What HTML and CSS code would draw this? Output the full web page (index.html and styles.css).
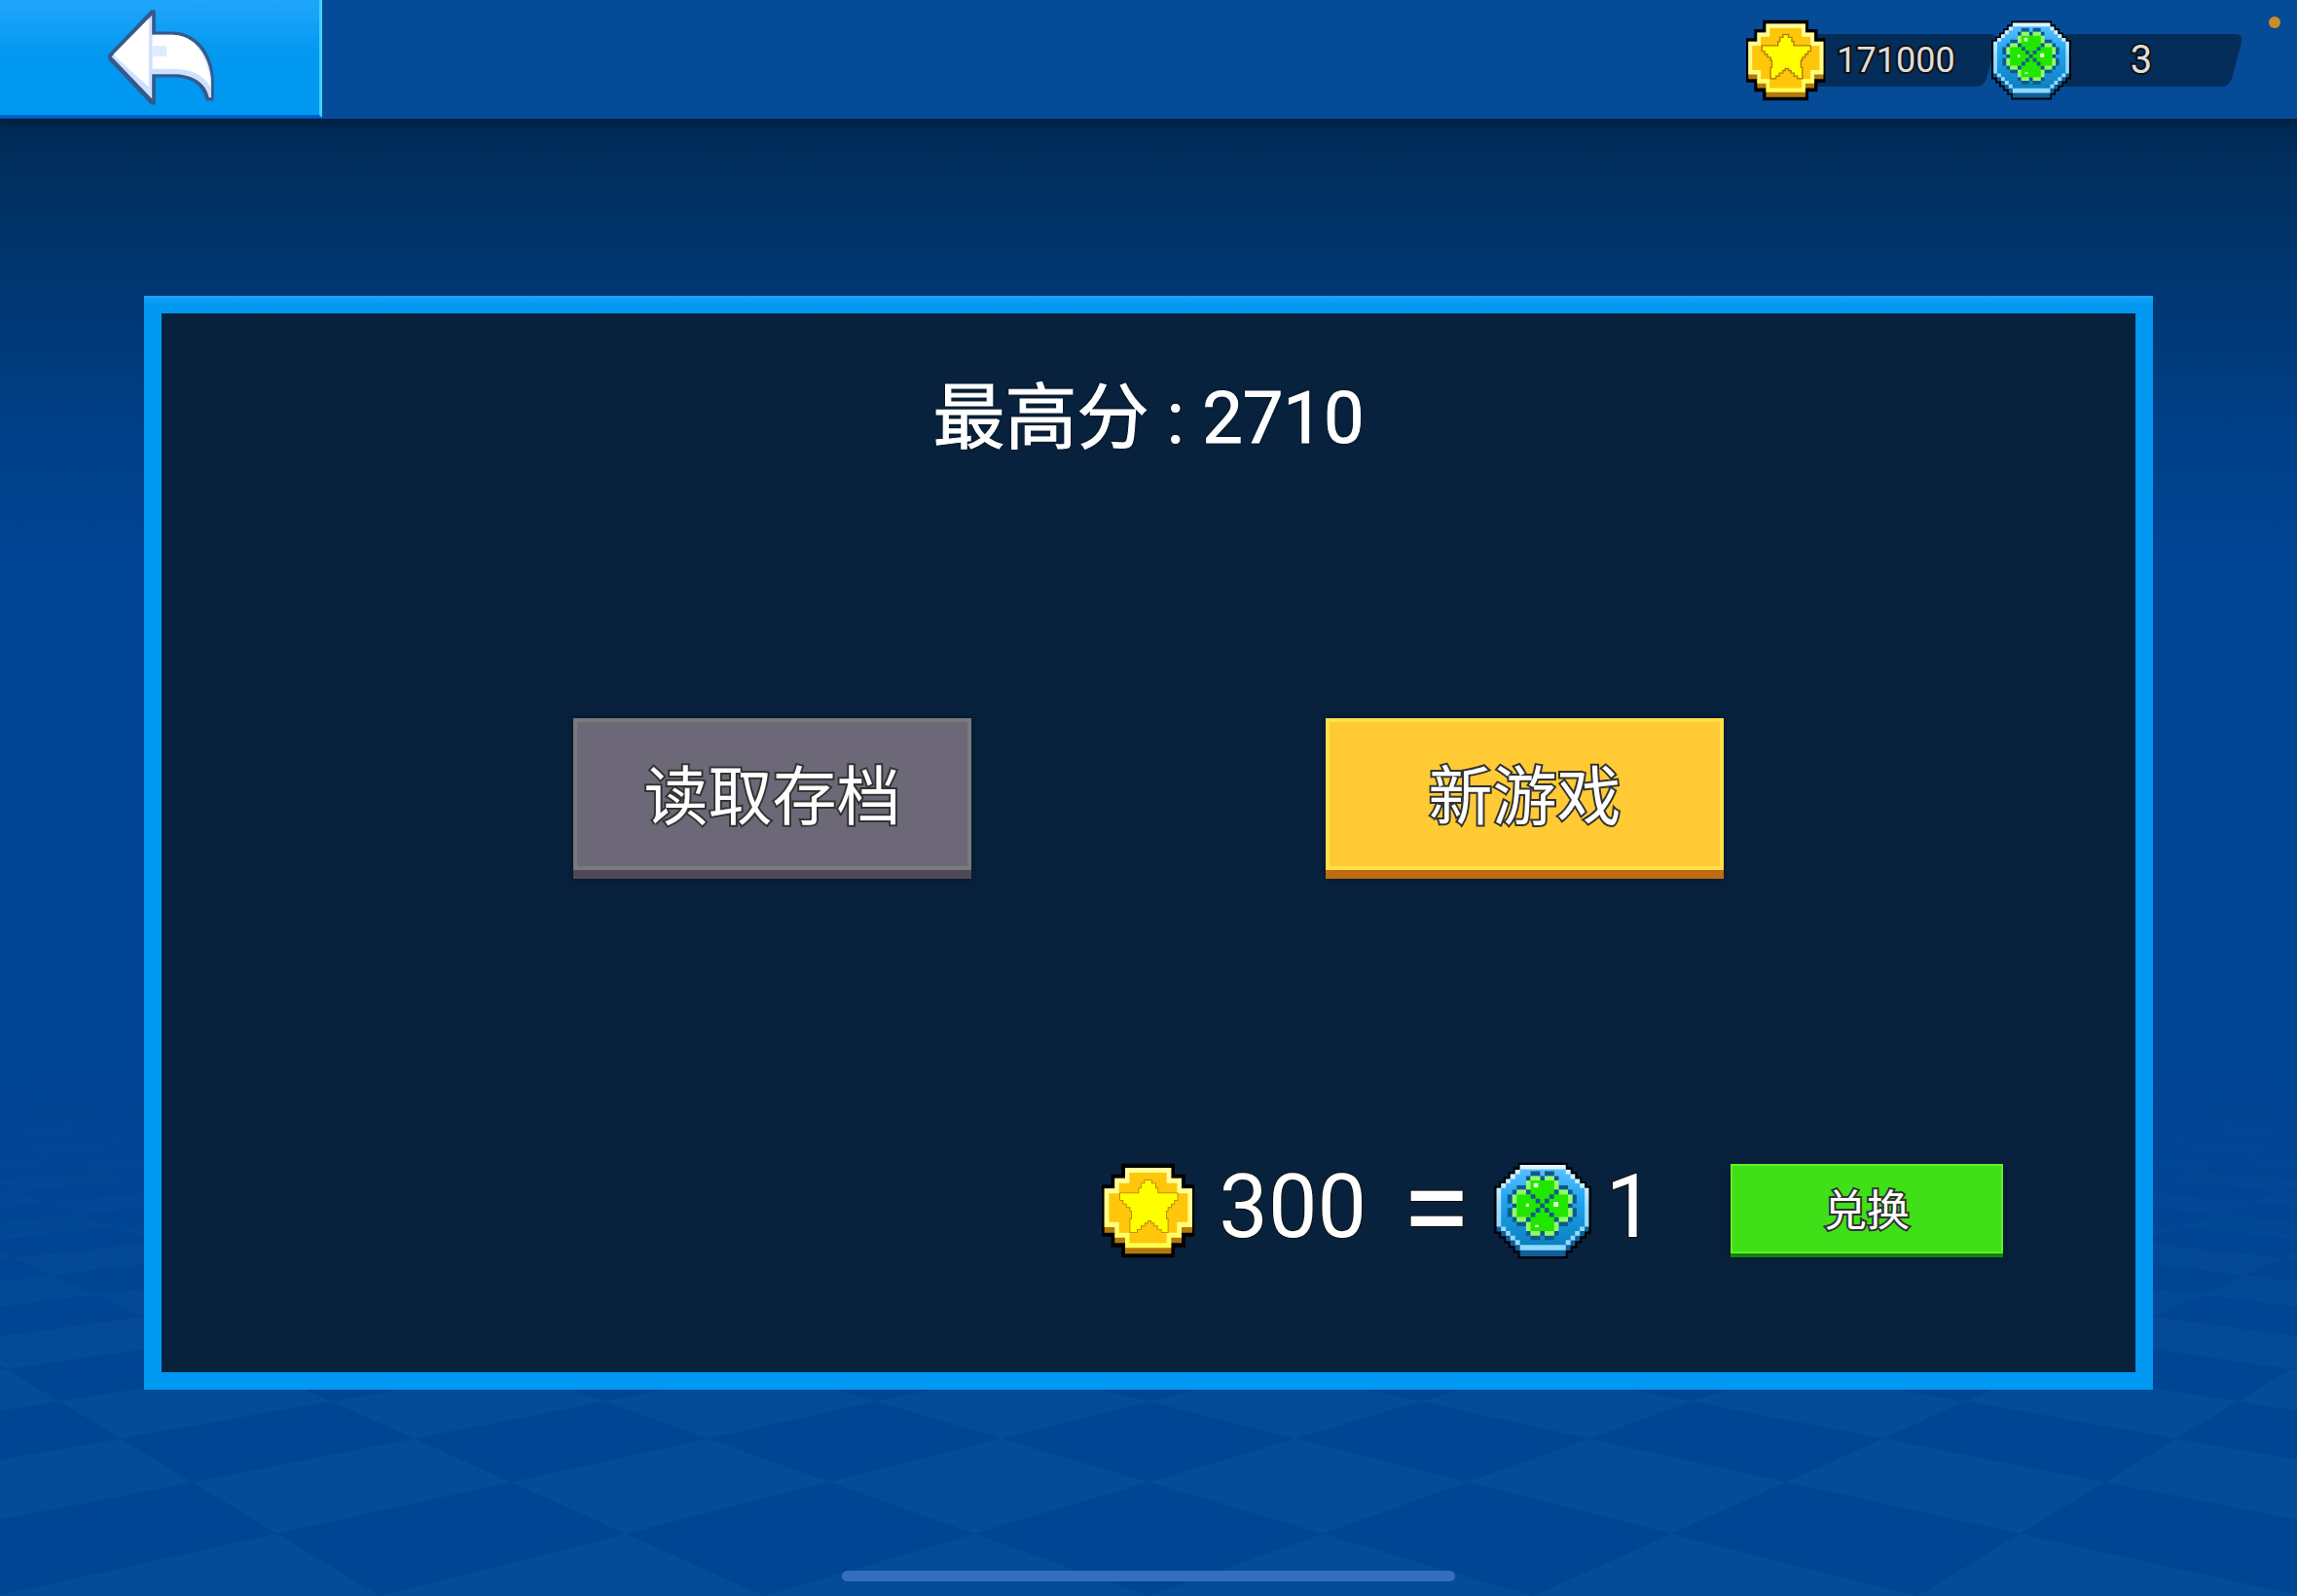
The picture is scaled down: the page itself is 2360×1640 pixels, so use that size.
FILE: index.html
```
<!DOCTYPE html>
<html lang="zh-CN">
<head>
	<meta charset="UTF-8">
	<title>最高分</title>
	<link rel="stylesheet" href="styles.css">
</head>
<body>
	<!-- icons -->
	<svg class="defs" width="0" height="0" aria-hidden="true">
		<defs>
			<linearGradient id="coinRim" x1="0" y1="0" x2="0" y2="1">
				<stop offset="0" stop-color="#ffff9c"/>
				<stop offset=".6" stop-color="#ffff90"/>
				<stop offset="1" stop-color="#ffff4a"/>
			</linearGradient>
			<linearGradient id="gemRim" x1="0" y1="0" x2="0" y2="1">
				<stop offset="0" stop-color="#e4f5ff"/>
				<stop offset=".3" stop-color="#c4eaff"/>
				<stop offset=".5" stop-color="#98dcff"/>
				<stop offset="1" stop-color="#8fd8ff"/>
			</linearGradient>
			<linearGradient id="gemFace" x1="0" y1="0" x2="0" y2="1">
				<stop offset="0" stop-color="#58c0ff"/>
				<stop offset=".4" stop-color="#22a4ee"/>
				<stop offset="1" stop-color="#0c80c0"/>
			</linearGradient>
			<symbol id="coin" viewBox="35 43 288 294">
				<path fill="#000" d="M95 45H260V78H293V110H321V270H293V303H260V335H95V303H64V270H35V110H64V78H95Z"/>
				<path fill="#b4780c" d="M107 58H249V90H281V122H314V258H281V290H249V323H107V290H75V258H43V122H75V90H107Z"/>
				<path fill="url(#coinRim)" d="M107 58H249V90H281V122H314V241H281V273H249V305H107V273H75V241H43V122H75V90H107Z"/>
				<path fill="#ffc60a" d="M120 73H235V105H267V137H300V225H267V258H235V290H120V258H88V225H57V137H88V105H120Z"/>
				<path fill="#ff0" stroke="#b87a10" stroke-width="5" d="M168 97H188V107H200V122H207V137H268V157H258V168H248V179H238V190H233V216H238V256H220V247H208V236H197V227H188V220H176V227H167V236H155V247H143V256H123V216H128V190H123V179H112V168H102V157H92V137H150V122H157V107H168Z"/>
			</symbol>
			<symbol id="clover" viewBox="42 38 304 304">
				<path fill="#000" d="M117 40H272V54H287V69H302V84H316V99H331V113H346V262H331V277H316V292H302V307H287V322H272V340H117V322H102V307H87V292H72V277H57V262H42V113H57V99H72V84H87V69H102V54H117Z"/>
				<path fill="#0c5f98" d="M123 47H266V62H281V76H295V91H310V105H325V119H338V255H325V270H310V285H295V300H281V315H266V333H123V315H108V300H93V285H79V270H64V255H50V119H64V105H79V91H93V76H108V62H123Z"/>
				<path fill="url(#gemRim)" d="M123 47H266V62H281V76H295V91H310V105H325V119H338V240H325V254H310V268H295V283H281V297H266V314H123V297H108V283H93V268H79V254H64V240H50V119H64V105H79V91H93V76H108V62H123Z"/>
				<path fill="url(#gemFace)" d="M123 61H266V76H281V91H295V105H310V119H325V240H310V254H295V268H281V282H266V297H123V282H108V268H93V254H79V240H64V119H79V105H93V91H108V76H123Z"/>
				<path fill="#10588e" d="M156 67h30v15h-30zM200 67h30v15h-30zM142 82h14v14h-14zM230 82h14v14h-14zM186 82h14v14h-14zM113 111h29v14h-29zM244 111h29v14h-29zM99 125h14v15h-14zM273 125h14v15h-14zM84 140h15v28h-15zM84 182h15v28h-15zM287 140h13v28h-13zM287 182h13v28h-13zM99 168h14v14h-14zM273 168h14v14h-14zM99 210h14v15h-14zM273 210h14v15h-14zM113 225h29v14h-29zM244 225h29v14h-29zM142 254h14v14h-14zM230 254h14v14h-14zM186 254h14v14h-14zM156 268h30v14h-30zM200 268h30v14h-30z"/>
				<path fill="#94fa66" d="M156 82h30v14h14v-14h30v14h14v29h29v15h14v28h-14v14h14v28h-14v15h-29v29h-14v14h-30v-14h-14v14h-30v-14h-14v-29h-29v-15h-14v-28h14v-14h-14v-28h14v-15h29v-29h14z"/>
				<path fill="#20e600" d="M156 96h74v158h-74zM113 140h160v70h-160zM142 125h102v100h-102z"/>
				<path fill="#10588e" d="M142 125h14v14h-14zM157 139h14v14h-14zM172 153h14v14h-14zM186 168h14v14h-14zM200 182h14v14h-14zM215 196h14v14h-14zM230 211h14v14h-14zM230 125h14v14h-14zM215 139h14v14h-14zM200 153h14v14h-14zM172 182h14v14h-14zM157 196h14v14h-14zM142 211h14v14h-14z"/>
				<path fill="#e2ffd6" d="M166 104h14v14h-14zM228 163h15v15h-15zM142 168h9v10h-9zM170 235h11v7h-11z"/>
			</symbol>
		</defs>
	</svg>

	<!-- checkered floor: wedges from two vanishing points, XORed by evenodd -->
	<svg class="floor" viewBox="0 955 2360 685" preserveAspectRatio="xMidYMax slice" aria-hidden="true">
		<path fill="#054c98" fill-rule="evenodd" d="
			M-737 955L-400 1640h395zM-737 955L390 1640h395zM-737 955L1180 1640h395zM-737 955L1970 1640h395zM-737 955L2760 1640h395z
			M-737 955L3550 1640h395zM-737 955L4340 1640h395zM-737 955L5130 1640h395zM-737 955L5920 1640h395zM-737 955L6710 1640h395z
			M-737 955L7500 1640h395zM-737 955L8290 1640h395zM-737 955L9080 1640h395zM-737 955L9870 1640h395zM-737 955L10660 1640h395z
			M3097 955L2760 1640h-395zM3097 955L1970 1640h-395zM3097 955L1180 1640h-395zM3097 955L390 1640h-395zM3097 955L-400 1640h-395z
			M3097 955L-1190 1640h-395zM3097 955L-1980 1640h-395zM3097 955L-2770 1640h-395zM3097 955L-3560 1640h-395zM3097 955L-4350 1640h-395z
			M3097 955L-5140 1640h-395zM3097 955L-5930 1640h-395zM3097 955L-6720 1640h-395zM3097 955L-7510 1640h-395zM3097 955L-8300 1640h-395z"/>
	</svg>

	<header class="topbar">
		<button class="back" type="button" aria-label="返回">
			<svg viewBox="330 30 334 300">
				<path fill="#345a8a" d="M333 172L466 33H480V100H532C615 102 658 175 660 245V314H636C625 265 590 242 535 242H480V326H466L333 186Z"/>
				<path fill="#cfe1ff" d="M344 178L469 50V110H530C600 110 645 170 652 245V304H645C635 255 590 232 535 232H469V308Z"/>
				<path fill="#fff" d="M350 170L459 60V272L356 178ZM470 110H530C600 110 645 175 651 270C620 228 585 215 535 215H470Z"/>
				<path fill="#dfebff" d="M470 144h44v33h-44z"/>
			</svg>
		</button>
		<div class="wallet">
			<div class="purse">
				<svg class="icon"><use href="#coin"/></svg>
				<span class="amount">171000</span>
			</div>
			<div class="purse">
				<svg class="icon"><use href="#clover"/></svg>
				<span class="amount large">3</span>
			</div>
		</div>
		<i class="dot"></i>
	</header>

	<main>
		<section class="panel">
			<h1>最高分 : 2710</h1>
			<div class="actions">
				<button class="btn gray" type="button">读取存档</button>
				<button class="btn yellow" type="button">新游戏</button>
			</div>
			<div class="exchange">
				<svg class="icon coin"><use href="#coin"/></svg>
				<span class="price">300</span>
				<span class="equal">=</span>
				<svg class="icon"><use href="#clover"/></svg>
				<span class="count">1</span>
				<button class="btn green" type="button">兑换</button>
			</div>
		</section>
	</main>
	<i class="home"></i>
</body>
</html>
```

FILE: styles.css
```
* {
	box-sizing: border-box;
}
body {
	position: relative;
	display: flex;
	flex-direction: column;
	min-height: 100vh;
	margin: 0;
	overflow: hidden;
	background: linear-gradient(#002a56 124px, #002f60 180px, #003774 310px, #003f86 430px, #004494 570px);
	font-family: Roboto, "Noto Sans CJK SC", sans-serif;
	color: #fff;
}
.defs {
	position: absolute;
}
.floor {
	position: absolute;
	left: 0;
	bottom: 0;
	width: 100%;
	z-index: -1;
	-webkit-mask-image: linear-gradient(transparent 22%, #000 70%);
	mask-image: linear-gradient(transparent 22%, #000 70%);
}
button {
	padding: 0;
	border: 0;
	font-family: inherit;
	color: inherit;
	cursor: pointer;
}

/* top bar */
.topbar {
	position: relative;
	display: flex;
	justify-content: space-between;
	height: 122px;
	padding-right: 62px;
	background: #064b97;
	box-shadow: 0 2px 10px 2px #001c3a;
}
.back {
	width: 331px;
	height: 121px;
	border-right: 3px solid #3fd2f8;
	border-bottom: 3px solid #0060cc;
	background: linear-gradient(#20a6fb, #0098f0 50%);
}
.back svg {
	display: block;
	width: 111px;
	height: 100px;
	margin: 0 auto 0 110px;
}
.wallet {
	display: flex;
	align-items: center;
	padding-top: 2px;
}
.purse {
	display: flex;
	align-items: center;
}
.purse .icon {
	position: relative;
	z-index: 1;
	width: 82px;
	height: 84px;
}
.amount {
	position: relative;
	z-index: 0;
	width: 212px;
	height: 54px;
	margin-left: -42px;
	padding-left: 16px;
	font-size: 36px;
	line-height: 54px;
	text-align: center;
	color: #ddd;
	-webkit-text-stroke: 4px #111;
	paint-order: stroke fill;
}
.amount:before {
	content: '';
	position: absolute;
	inset: 0;
	z-index: -1;
	border-radius: 8px;
	background: #042d5a;
	transform: skewX(-15deg);
}
.large {
	font-size: 40px;
}
.dot {
	position: absolute;
	top: 17px;
	right: 17px;
	width: 12px;
	height: 12px;
	border-radius: 50%;
	background: #cc8c28;
}

/* panel */
main {
	flex: 1;
	display: flex;
	padding: 182px 148px 212px;
}
.panel {
	flex: 1;
	display: flex;
	flex-direction: column;
	justify-content: space-between;
	padding: 72px 136px 96px;
	border: 18px solid transparent;
	background: linear-gradient(#08223d, #08223d) padding-box, linear-gradient(#1ea4f8, #0098f0 10px) border-box;
}
h1 {
	margin: 0;
	font-size: 74px;
	font-weight: 400;
	line-height: 72px;
	text-align: center;
	-webkit-text-stroke: 1px #fff;
	text-shadow: 0 0 3px #000;
}
.actions {
	display: flex;
	justify-content: center;
	gap: 364px;
}
.btn {
	width: 409px;
	height: 165px;
	padding-bottom: 14px;
	font-size: 66px;
	-webkit-text-stroke: 4px #333;
	paint-order: stroke fill;
}
.gray {
	background: #6d6877;
	box-shadow: inset 0 -9px #4e4859, inset 0 -13px #7a7a7a, inset 0 0 0 4px #7a7a7a, 0 0 8px #04152a;
}
.yellow {
	background: #ffca33;
	box-shadow: inset 0 -9px #c06a14, inset 0 -13px #ffe04a, inset 0 0 0 4px #ffe04a, 0 0 8px #04152a;
}
.exchange {
	display: flex;
	justify-content: flex-end;
	align-items: center;
	height: 140px;
	font-size: 90px;
	line-height: 92px;
	-webkit-text-stroke: 2px #111;
	paint-order: stroke fill;
}
.exchange .icon {
	width: 100px;
	height: 100px;
}
.exchange .coin {
	width: 96px;
}
.exchange span {
	padding-bottom: 6px;
}
.price {
	margin: 0 36px 0 24px;
}
.equal {
	margin-right: 24px;
	font-size: 130px;
}
.count {
	margin: 0 78px 0 14px;
}
.green {
	width: 280px;
	height: 96px;
	padding-bottom: 6px;
	font-size: 44px;
	background: #3fe018;
	box-shadow: inset 0 -4px #128410, inset 0 -6px #62f020, inset 0 0 0 2px #62f020, 0 0 8px #04152a;
}

.home {
	position: absolute;
	left: 50%;
	bottom: 15px;
	width: 630px;
	height: 11px;
	margin-left: -315px;
	border-radius: 6px;
	background: #346ebf;
}
```
